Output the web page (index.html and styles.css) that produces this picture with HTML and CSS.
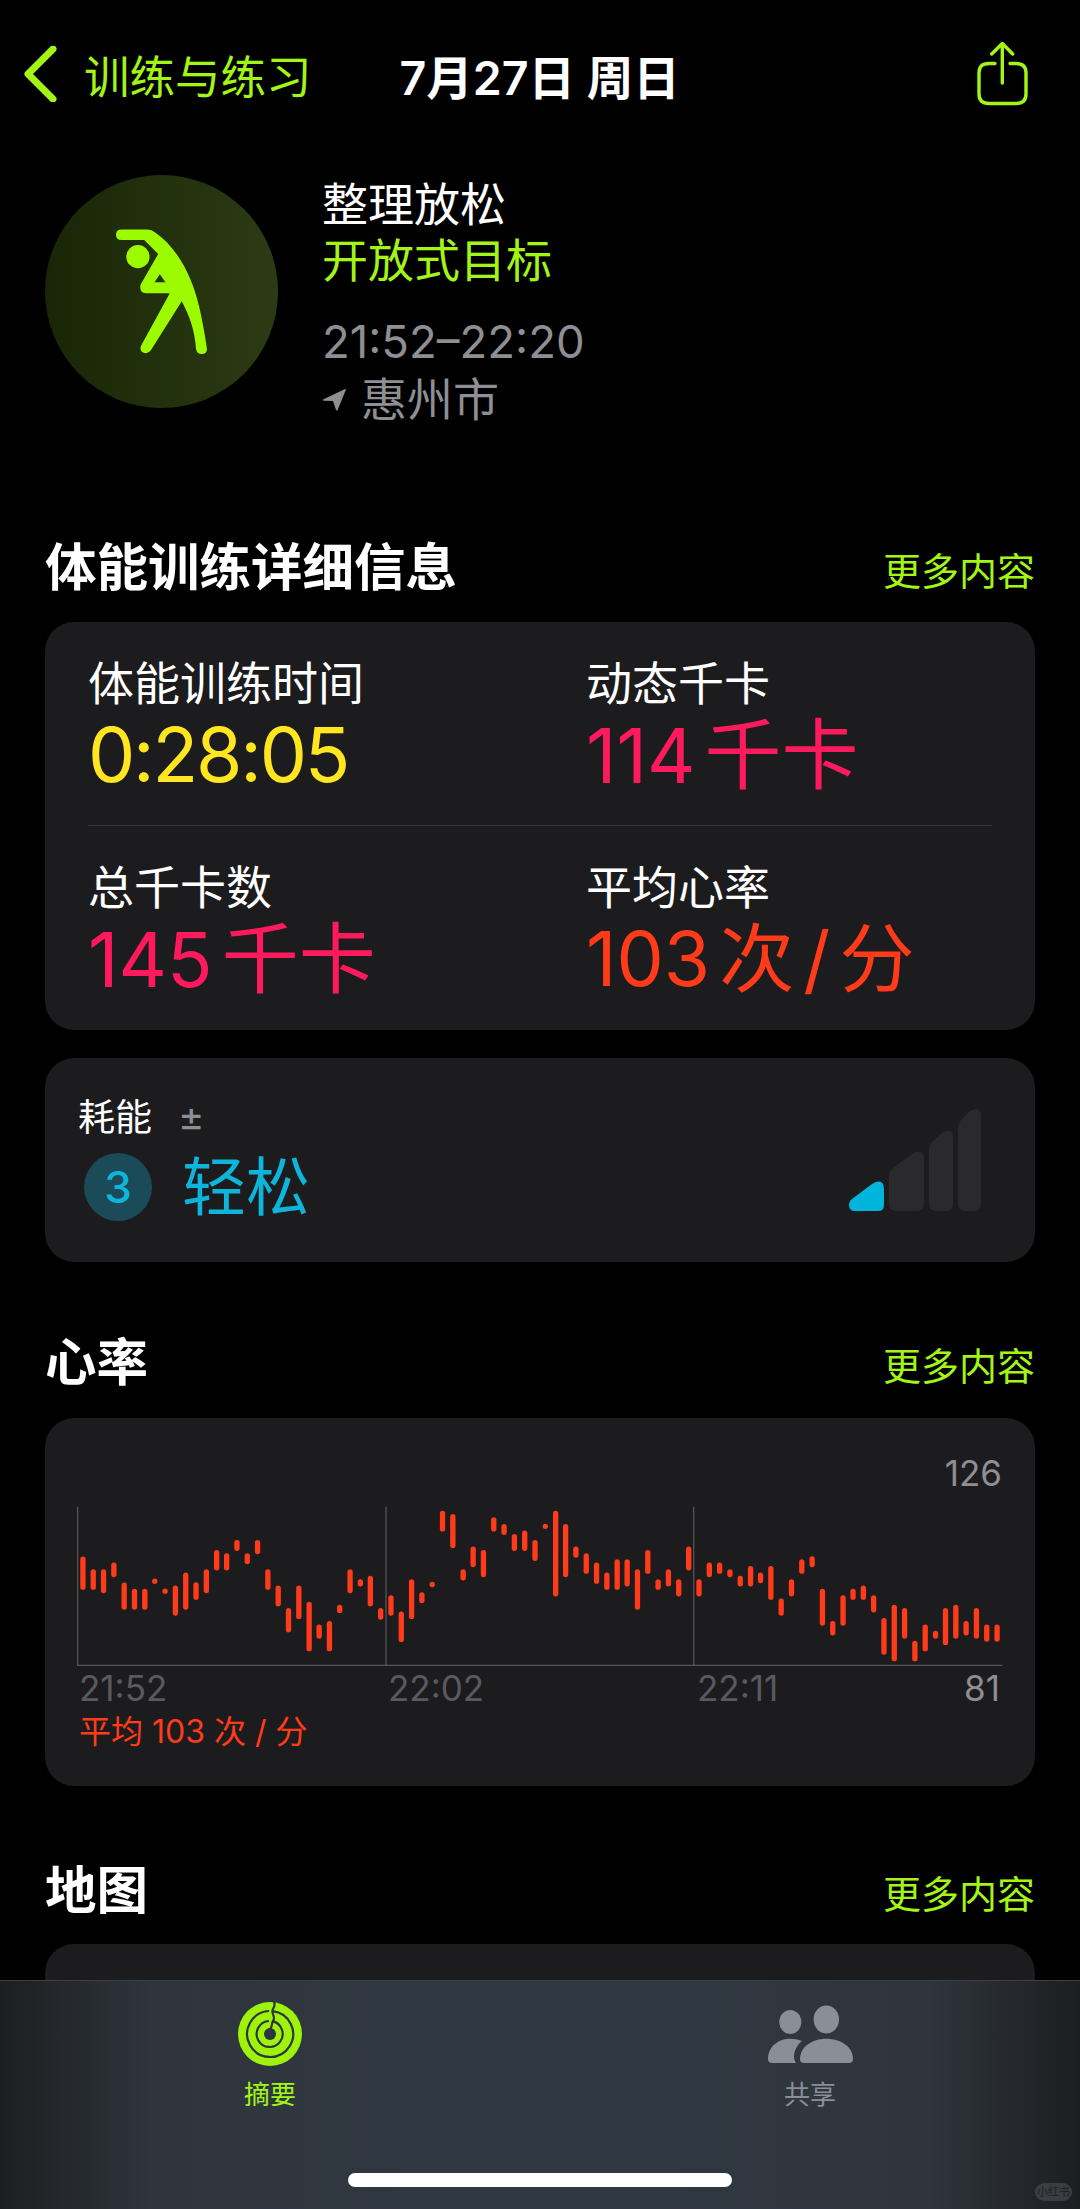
FILE: index.html
```html
<!DOCTYPE html>
<html lang="zh-CN">
<head>
    <meta charset="UTF-8">
    <meta name="viewport" content="width=device-width, initial-scale=1.0">
    <title>体能训练</title>
    <link rel="stylesheet" href="styles.css">
</head>
<body>
<div class="page">
    <!-- top bar -->
    <div class="topbar">
        <svg class="back_icon" width="34" height="56" viewBox="0 0 34 56"><path d="M29 3 L4 28 L29 53" fill="none" stroke="#a2f514" stroke-width="7" stroke-linecap="round" stroke-linejoin="round"/></svg>
        <span class="back_text">训练与练习</span>
        <span class="date">7月27日 周日</span>
        <svg class="share_icon" width="51" height="65" viewBox="0 0 51 65"><path d="M18 21.5 H12 Q2 21.5 2 31 V52 Q2 61.5 12 61.5 H39 Q49 61.5 49 52 V31 Q49 21.5 39 21.5 H33 M25.3 41 V2 M14.7 12 L25.3 1.5 L35.7 12" fill="none" stroke="#a2f514" stroke-width="3.4" stroke-linecap="round" stroke-linejoin="round"/></svg>
    </div>

    <!-- workout summary -->
    <div class="hero">
        <div class="hero_circle">
            <svg width="93" height="127" viewBox="160 205 280 380"><circle cx="229" cy="290" r="35" fill="#9dfb00"/><path fill="#9dfb00" fill-rule="evenodd" d="M180 208 H258 Q270 208 282 218 C340 258 395 340 420 470 Q430 520 437 568 Q437 583 421 583 Q406 583 404 568 C400 510 385 470 361 424 L268 572 Q258 586 243 578 Q232 570 240 555 L325 400 H252 Q235 398 236 380 Q237 372 242 366 L290 282 L248 240 H180 Q163 240 163 224 Q163 208 180 208 Z M295 343 L279 367 H312 Z"/></svg>
        </div>
        <div class="hero_text">
            <div class="hero_line">整理放松</div>
            <div class="hero_line green">开放式目标</div>
            <div class="hero_line gray hero_time">21:52–22:20</div>
            <div class="hero_line gray hero_place">
                <svg width="24" height="23" viewBox="0 0 24 23"><path d="M23 1 L1 11.5 Q0 12.5 2 12.7 L11 13 L14 22 Q15 23 15.6 22 L23.8 2 Q24 0.5 23 1 Z" fill="#8e8e93"/></svg>
                <span>惠州市</span>
            </div>
        </div>
    </div>

    <!-- details -->
    <div class="sec_head sec_first">
        <div class="sec_title">体能训练详细信息</div>
        <div class="sec_more">更多内容</div>
    </div>
    <div class="card stats">
        <div class="stats_row row_line">
            <div>
                <div class="stat_label">体能训练时间</div>
                <div class="stat_value stat_time yellow">0:28:05</div>
            </div>
            <div>
                <div class="stat_label">动态千卡</div>
                <div class="stat_value pink">114 <span class="stat_unit">千卡</span></div>
            </div>
        </div>
        <div class="stats_row">
            <div>
                <div class="stat_label">总千卡数</div>
                <div class="stat_value pink">145 <span class="stat_unit">千卡</span></div>
            </div>
            <div>
                <div class="stat_label">平均心率</div>
                <div class="stat_value red">103 次 / 分</div>
            </div>
        </div>
    </div>

    <div class="card effort">
        <div class="effort_left">
            <div class="effort_title">耗能<span class="effort_pm">±</span></div>
            <div class="effort_main">
                <div class="effort_num">3</div>
                <div class="effort_text">轻松</div>
            </div>
        </div>
        <svg class="effort_bars" width="132" height="103" viewBox="0 0 132 103">
            <path fill="#00b5dc" d="M3 91 L23 76 Q35 69 35 82 V97 Q35 103 29 103 H6 Q0 103 0 97 V96 Q0 93 3 91 Z"/>
            <g fill="#2a2a2d">
                <path d="M40 68 Q40 63 44 60 L63 46 Q75 39 75 52 V96 Q75 103 68 103 H47 Q40 103 40 96 Z"/>
                <path d="M80 42 Q80 37 84 33 L93 25 Q104 19 104 30 V96 Q104 103 97 103 H87 Q80 103 80 96 Z"/>
                <path d="M109 20 Q109 15 113 11 L121 3 Q132 -3 132 8 V96 Q132 103 125 103 H116 Q109 103 109 96 Z"/>
            </g>
        </svg>
    </div>

    <!-- heart rate -->
    <div class="sec_head sec_heart">
        <div class="sec_title">心率</div>
        <div class="sec_more">更多内容</div>
    </div>
    <div class="card heart">
        <div class="heart_max">126</div>
        <svg class="heart_chart" width="930" height="163" viewBox="105 195 2790 490">
            <path d="M110 200 V677 H2890 M1037 200 V677 M1962 200 V677" fill="none" stroke="#545457" stroke-width="4"/>
            <path fill="none" stroke="#ff3b1a" stroke-width="16" stroke-linecap="round" d="M126 358V442M157 396V442M188 396V452M219 376V404M250 436V502M281 455V502M312 455V502M342 424h.01M373 454h.01M404 445V520M435 406V502M466 435V472M497 396V452M528 338V384M558 348V384M589 308V325M620 348V365M651 308V335M682 396V442M713 445V492M744 513V570M775 445V530M806 494V627M836 562V589M867 552V627M898 503V512M929 396V452M960 426V432M990 416V492M1021 513V532M1052 474V520M1083 523V599M1114 426V530M1145 465V482M1176 434h.01M1207 220V267M1238 230V317M1269 396V414M1299 328V374M1330 338V404M1361 240V267M1392 260V277M1423 290V325M1454 280V325M1485 308V355M1516 259h.01M1547 220V462M1577 260V404M1608 328V345M1639 348V394M1670 376V424M1701 406V442M1732 366V442M1762 366V432M1793 396V502M1824 338V394M1855 426V442M1886 396V432M1917 426V462M1947 328V384M1978 426V462M2009 376V404M2040 376V394M2071 396V404M2102 416V432M2133 386V432M2163 406V422M2194 386V472M2225 484V520M2256 426V462M2287 366V394M2318 357V374M2349 455V550M2380 552V579M2411 474V550M2441 455V472M2472 445V472M2503 474V510M2534 543V637M2565 503V657M2596 513V589M2627 611V657M2658 562V627M2689 581V589M2719 513V608M2750 503V589M2781 552V579M2812 513V589M2843 562V598M2874 562V598"/>
        </svg>
        <div class="heart_axis">
            <span>21:52</span>
            <span>22:02</span>
            <span>22:11</span>
            <span class="heart_min">81</span>
        </div>
        <div class="heart_avg">平均 103 次 / 分</div>
    </div>

    <!-- map -->
    <div class="sec_head sec_map">
        <div class="sec_title">地图</div>
        <div class="sec_more">更多内容</div>
    </div>
    <div class="card map_card"></div>

    <!-- tab bar sits over the scrolled content -->
    <div class="tabbar">
        <div class="tab tab_on">
            <div class="tab_icon">
                <svg width="66" height="66" viewBox="0 0 66 66">
                    <circle cx="33" cy="33" r="32" fill="#9ff20a"/>
                    <g fill="none" stroke="#2c343e" stroke-width="2.2">
                        <path d="M35.5 10.1 A23 23 0 1 1 32 10"/>
                        <path d="M35 20.2 A13 13 0 1 1 32 20"/>
                        <path d="M37 0.5 C38 3 38 5 36 8 C34 11 37 14 37 17 C37 20 35 21 35 23 C35 25 34 26 33.5 28" stroke-linecap="round"/>
                    </g>
                    <circle cx="33" cy="33" r="6" fill="#2c343e"/>
                </svg>
            </div>
            <div class="tab_label">摘要</div>
        </div>
        <div class="tab">
            <div class="tab_icon">
                <svg width="85" height="58" viewBox="0 0 85 58" fill="#8a8e96">
                    <ellipse cx="22.3" cy="17" rx="11" ry="12"/>
                    <ellipse cx="58.3" cy="14.5" rx="12.7" ry="14"/>
                    <path d="M36 58 Q32 58 32 54 C32 42 44 33.7 58.3 33.7 C73 33.7 85 42 85 54 Q85 58 81 58 Z"/>
                    <path d="M4 58 Q0 58 0 54 C0 42 10 33.7 22 33.7 C26 33.7 30 34.5 34 36 C29 40 26 46 26 52 Q26 55 28 58 Z"/>
                </svg>
            </div>
            <div class="tab_label">共享</div>
        </div>
        <div class="home_bar"></div>
        <div class="watermark">小红书</div>
    </div>
</div>
</body>
</html>
```

FILE: styles.css
```css
*{
    box-sizing: border-box;
}
body{
    margin: 0;
    background-color: #000;
    color: #fff;
    font-family: Inter, "Noto Sans CJK SC", sans-serif;
}
.page{
    position: relative;
    width: 1080px;
    height: 2209px;
    overflow: hidden;
    padding-top: 39px;
    background-color: #000;
}

/* top bar */
.topbar{
    display: flex;
    align-items: center;
    height: 70px;
    padding: 0 52px 0 24px;
}
.back_text{
    margin-left: 26px;
    font-size: 45.5px;
    color: #a2f514;
}
.date{
    margin-left: 88px;
    font-size: 46.5px;
    font-weight: 600;
}
.share_icon{
    margin-left: auto;
}

/* workout summary */
.hero{
    display: flex;
    gap: 44px;
    margin-top: 66px;
    padding-left: 45px;
}
.hero_circle{
    display: flex;
    align-items: center;
    justify-content: center;
    width: 233px;
    height: 233px;
    border-radius: 50%;
    background: linear-gradient(90deg, #182607, #2c3b13);
}
.hero_text{
    padding-top: 1px;
}
.hero_line{
    height: 56px;
    line-height: 56px;
    font-size: 46px;
}
.hero_time{
    margin-top: 26px;
    font-size: 45.5px;
}
.hero_place{
    display: flex;
    align-items: center;
    gap: 15px;
    margin-top: 1px;
}
.green{
    color: #a2f514;
}
.gray{
    color: #8e8e93;
}

/* section heads */
.sec_head{
    display: flex;
    align-items: flex-end;
    justify-content: space-between;
    margin: 0 45px 25px;
}
.sec_first{
    margin-top: 110px;
}
.sec_heart{
    margin-top: 70px;
    margin-bottom: 26px;
}
.sec_map{
    margin-top: 74px;
    margin-bottom: 24px;
}
.sec_title{
    height: 60px;
    line-height: 60px;
    font-size: 51.5px;
    font-weight: 700;
}
.sec_more{
    height: 50px;
    margin-bottom: 1px;
    line-height: 50px;
    font-size: 38px;
    color: #a2f514;
}

.card{
    margin: 0 45px;
    border-radius: 29px;
    background-color: #1c1c1e;
}

/* stats card */
.stats{
    height: 408px;
    padding: 0 43px;
}
.stats_row{
    display: grid;
    grid-template-columns: 498px 1fr;
    height: 204px;
    padding-top: 39px;
}
.row_line{
    border-bottom: 1px solid #38383a;
}
.stat_label{
    height: 44px;
    line-height: 44px;
    font-size: 46px;
}
.stat_value{
    height: 90px;
    margin-top: 5px;
    line-height: 90px;
    font-size: 75px;
    word-spacing: -12px;
}
.stat_time{
    letter-spacing: -2.2px;
}
.stat_unit{
    font-size: 77px;
}
.yellow{
    color: #ffe620;
}
.pink{
    color: #ff1a5e;
}
.red{
    color: #ff3b1a;
}

/* effort card */
.effort{
    display: flex;
    justify-content: space-between;
    height: 204px;
    margin-top: 28px;
    padding: 37px 54px 0 33px;
}
.effort_title{
    height: 44px;
    line-height: 44px;
    font-size: 37px;
}
.effort_pm{
    margin-left: 26px;
    font-size: 40px;
    color: #8e8e93;
}
.effort_main{
    display: flex;
    align-items: center;
    gap: 30px;
    margin-top: 13px;
    margin-left: 6px;
}
.effort_num{
    width: 68px;
    height: 68px;
    border-radius: 50%;
    background-color: #1b4a58;
    line-height: 68px;
    text-align: center;
    font-size: 44px;
    font-weight: 500;
    color: #0cb5d9;
}
.effort_text{
    font-size: 64px;
    line-height: 70px;
    color: #0cb5d9;
}
.effort_bars{
    margin-top: 13px;
}

/* heart chart */
.heart{
    height: 368px;
    padding-top: 35px;
}
.heart_max{
    height: 40px;
    padding-right: 33px;
    line-height: 40px;
    text-align: right;
    font-size: 35px;
    color: #8e8e93;
}
.heart_chart{
    display: block;
    margin: 12px 0 0 30px;
}
.heart_axis{
    display: grid;
    grid-template-columns: 309px 309px 1fr auto;
    height: 40px;
    padding: 0 35px 0 34px;
    line-height: 40px;
    font-size: 35px;
    color: #5a5a5e;
}
.heart_min{
    color: #8e8e93;
}
.heart_avg{
    height: 48px;
    padding-left: 34px;
    line-height: 48px;
    font-size: 32px;
    color: #ff3b1a;
}

.map_card{
    height: 200px;
}

/* tab bar */
.tabbar{
    position: absolute;
    left: 0;
    right: 0;
    bottom: 0;
    display: grid;
    grid-template-columns: 1fr 1fr;
    height: 229px;
    padding-top: 20px;
    border-top: 1px solid #3c4046;
    background: linear-gradient(90deg, #1d1e20 0%, #2e353d 14%, #303841 50%, #2e353d 86%, #1d1e20 100%);
}
.tab{
    text-align: center;
}
.tab_icon{
    display: flex;
    align-items: center;
    justify-content: center;
    height: 66px;
}
.tab_label{
    height: 40px;
    margin-top: 8px;
    line-height: 40px;
    font-size: 26px;
    color: #8a8e96;
}
.tab_on .tab_label{
    color: #a2f514;
}
.home_bar{
    position: absolute;
    left: 348px;
    bottom: 22px;
    width: 384px;
    height: 14px;
    border-radius: 7px;
    background-color: #fff;
}
.watermark{
    position: absolute;
    right: 8px;
    bottom: 8px;
    width: 37px;
    height: 18px;
    border-radius: 9px;
    background-color: #3a3d41;
    line-height: 18px;
    text-align: center;
    font-size: 11px;
    color: #1e2022;
}
```
